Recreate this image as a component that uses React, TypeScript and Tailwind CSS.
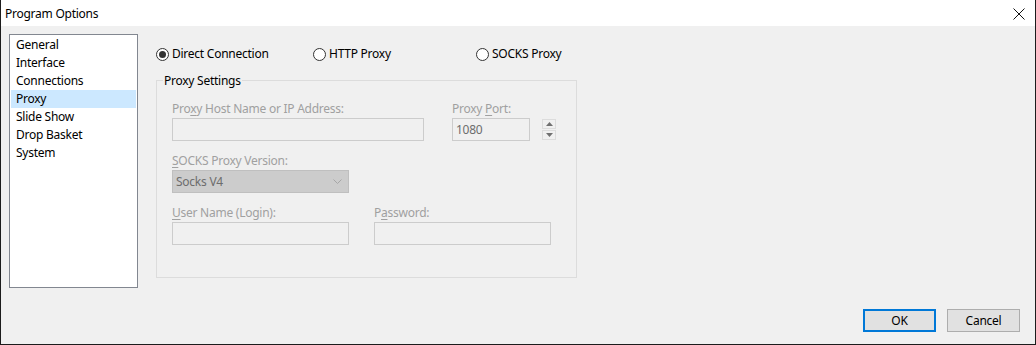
import React from "react";

const font = { fontFamily: '"Noto Sans", "Open Sans", sans-serif' };

const pages = ["General", "Interface", "Connections", "Proxy", "Slide Show", "Drop Basket", "System"];

function Radio({ label, checked }: { label: string; checked?: boolean }) {
  return (
    <div className="flex items-center">
      <span className="w-[13px] h-[13px] rounded-full border border-[#333333] bg-white flex items-center justify-center">
        {checked && <span className="w-[7px] h-[7px] rounded-full bg-[#333333]" />}
      </span>
      <span className="ml-[3px] text-black">{label}</span>
    </div>
  );
}

function Field({ label, width, children }: { label: React.ReactNode; width: string; children?: React.ReactNode }) {
  return (
    <div className={`flex flex-col ${width}`}>
      <div className="h-[15px] leading-[15px] text-[#a0a0a0] whitespace-nowrap">{label}</div>
      <div className="mt-[2px] h-[23px] border border-[#cccccc] bg-[#f0f0f0] flex items-center px-[3px] text-[#6d6d6d]">
        {children}
      </div>
    </div>
  );
}

export default function App() {
  return (
    <div
      className="w-[1036px] h-[345px] bg-[#f0f0f0] border-x border-b border-[#1c1c1c] flex flex-col text-[12px] tracking-[-0.25px] text-black select-none"
      style={font}
    >
      {/* title bar */}
      <div className="h-[26px] bg-white flex items-center justify-between pl-[4px] pr-[10px] shrink-0">
        <span className="leading-[15px]">Program Options</span>
        <svg width="12" height="12" viewBox="0 0 12 12" className="mt-[1px]">
          <path d="M0.5 0.5 L11.5 11.5 M11.5 0.5 L0.5 11.5" stroke="#111" strokeWidth="1" />
        </svg>
      </div>

      {/* body */}
      <div className="flex flex-1">
        <div className="ml-[8px] mt-[8px] w-[129px] h-[254px] border border-[#828790] bg-white p-[1px]">
          {pages.map((p) => (
            <div
              key={p}
              className={`h-[18px] leading-[18px] pl-[5px] ${p === "Proxy" ? "bg-[#cce8ff]" : ""}`}
            >
              {p}
            </div>
          ))}
        </div>

        <div className="ml-[18px] flex flex-col">
          <div className="mt-[20px] h-[16px] flex items-center">
            <div className="w-[157px]">
              <Radio label="Direct Connection" checked />
            </div>
            <div className="w-[163px]">
              <Radio label="HTTP Proxy" />
            </div>
            <Radio label="SOCKS Proxy" />
          </div>

          <fieldset className="mt-[11px] w-[421px] h-[205px] border border-[#dcdcdc] pl-[15px] pt-[13px]">
            <legend className="-ml-[9px] leading-[15px] px-[1px] text-black">Proxy Settings</legend>

            <div className="flex items-start">
              <Field
                width="w-[252px]"
                label={
                  <>
                    Pro<u className="underline-offset-2">x</u>y Host Name or IP Address:
                  </>
                }
              />
              <div className="ml-[28px]">
                <Field
                  width="w-[78px]"
                  label={
                    <>
                      Proxy <u className="underline-offset-2">P</u>ort:
                    </>
                  }
                >
                  1080
                </Field>
              </div>
              <div className="ml-[12px] mt-[18px] flex flex-col gap-[1px]">
                <div className="w-[14px] h-[10px] border border-[#dcdcdc] bg-[#f0f0f0] flex items-center justify-center">
                  <svg width="7" height="4" viewBox="0 0 7 4">
                    <path d="M3.5 0 L7 4 L0 4 Z" fill="#707070" />
                  </svg>
                </div>
                <div className="w-[14px] h-[10px] border border-[#dcdcdc] bg-[#f0f0f0] flex items-center justify-center">
                  <svg width="7" height="4" viewBox="0 0 7 4">
                    <path d="M0 0 L7 0 L3.5 4 Z" fill="#707070" />
                  </svg>
                </div>
              </div>
            </div>

            <div className="mt-[12px] flex flex-col w-[177px]">
              <div className="h-[15px] leading-[15px] text-[#a0a0a0]">
                <u className="underline-offset-2">S</u>OCKS Proxy Version:
              </div>
              <div className="mt-[2px] h-[23px] border border-[#bfbfbf] bg-[#cccccc] flex items-center justify-between pl-[3px] pr-[6px] text-[#6d6d6d]">
                <span>Socks V4</span>
                <svg width="9" height="5" viewBox="0 0 9 5">
                  <path d="M0.5 0.5 L4.5 4.5 L8.5 0.5" stroke="#a6a6a6" strokeWidth="1" fill="none" />
                </svg>
              </div>
            </div>

            <div className="mt-[12px] flex">
              <Field
                width="w-[177px]"
                label={
                  <>
                    <u className="underline-offset-2">U</u>ser Name (Login):
                  </>
                }
              />
              <div className="ml-[25px]">
                <Field
                  width="w-[177px]"
                  label={
                    <>
                      P<u className="underline-offset-2">a</u>ssword:
                    </>
                  }
                />
              </div>
            </div>
          </fieldset>
        </div>
      </div>

      {/* footer */}
      <div className="flex justify-end gap-[11px] pr-[15px] pb-[12px] shrink-0">
        <button className="w-[73px] h-[23px] border-2 border-[#0078d7] bg-[#e1e1e1] text-black">OK</button>
        <button className="w-[73px] h-[23px] border border-[#adadad] bg-[#e1e1e1] text-black">Cancel</button>
      </div>
    </div>
  );
}
